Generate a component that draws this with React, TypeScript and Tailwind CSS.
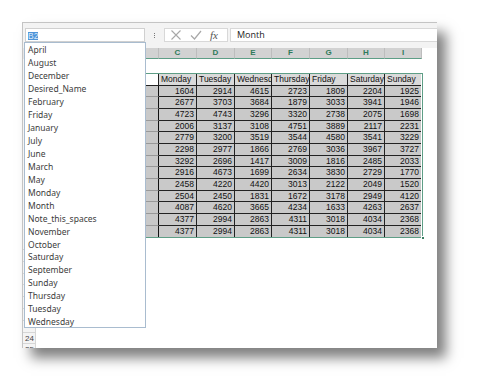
import React from "react";

const items = [
  "April","August","December","Desired_Name","February","Friday","January","July","June","March","May","Monday","Month","Note_this_spaces","November","October","Saturday","September","Sunday","Thursday","Tuesday","Wednesday",
];

const headers = ["Monday","Tuesday","Wednesday","Thursday","Friday","Saturday","Sunday"];
const data = [
  [1604,2914,4615,2723,1809,2204,1925],
  [2677,3703,3684,1879,3033,3941,1946],
  [4723,4743,3296,3320,2738,2075,1698],
  [2006,3137,3108,4751,3889,2117,2231],
  [2779,3200,3519,3544,4580,3541,3229],
  [2298,2977,1866,2769,3036,3967,3727],
  [3292,2696,1417,3009,1816,2485,2033],
  [2916,4673,1699,2634,3830,2729,1770],
  [2458,4220,4420,3013,2122,2049,1520],
  [2504,2450,1831,1672,3178,2949,4120],
  [4087,4620,3665,4234,1633,4263,2637],
  [4377,2994,2863,4311,3018,4034,2368],
  [4377,2994,2863,4311,3018,4034,2368],
];
const colW = [38,38,37,38,38,37,37];
const letters = ["C","D","E","F","G","H","I"];

export default function App() {
  return (
    <div className="w-[479px] h-[390px] bg-white overflow-hidden" style={{ fontFamily: '"Liberation Sans", Arial, sans-serif' }}>
      <div className="relative ml-[22px] mt-[22px] w-[415px] h-[326px] bg-white border-t border-l border-[#c4c4c4] shadow-[9px_10px_12px_rgba(0,0,0,0.5)]">
        <div className="w-full h-full overflow-hidden">
          {/* formula bar */}
          <div className="h-[25px] bg-[#f3f3f3] flex items-start pt-[5px]">
            <div className="ml-[2px] w-[120px] h-[14px] bg-white border border-[#d0d0d0]" />
            <div className="w-[19px] h-[14px] flex flex-col items-center justify-center gap-[1px]">
              <div className="w-[1px] h-[1px] bg-[#777]" />
              <div className="w-[1px] h-[1px] bg-[#777]" />
              <div className="w-[1px] h-[1px] bg-[#777]" />
            </div>
            <div className="w-[64px] h-[14px] bg-white border border-[#d8d8d8] flex items-center">
              <svg width="12" height="12" viewBox="0 0 12 12" className="ml-[5px]">
                <path d="M1.5 1.5 L10.5 10.5 M10.5 1.5 L1.5 10.5" stroke="#a8a8a8" strokeWidth="1.1" fill="none" />
              </svg>
              <svg width="12" height="12" viewBox="0 0 12 12" className="ml-[8px]">
                <path d="M1 6.5 L4.5 10 L11 2" stroke="#a8a8a8" strokeWidth="1.2" fill="none" />
              </svg>
              <span className="ml-[8px] text-[11px] italic leading-none text-[#555]" style={{ fontFamily: '"Liberation Serif", serif' }}>fx</span>
            </div>
            <div className="ml-[2px] flex-1 h-[14px] bg-white border-t border-b border-l border-[#d8d8d8] flex items-center pl-[6px] text-[9px] text-[#222]" style={{ fontFamily: '"Open Sans", sans-serif' }}>
              Month
            </div>
          </div>
          {/* column header band */}
          <div className="flex h-[11px]">
            <div className="w-[13px] bg-[#e6e6e6] border-r border-[#c8c8c8]" />
            <div className="w-[85px] bg-[#e6e6e6] border-r border-[#c8c8c8]" />
            <div className="w-[38px] bg-[#d2d2d2] border-r border-[#bdbdbd] border-b border-b-[#5e9e86]" />
            {letters.map((l, i) => (
              <div key={l} className="bg-[#d2d2d2] border-r border-[#bdbdbd] border-b border-b-[#5e9e86] flex items-center justify-center text-[8px] font-bold text-[#2f7a5a]" style={{ width: colW[i] }}>
                {l}
              </div>
            ))}
            <div className="flex-1 bg-white" />
          </div>
          {/* row 1 */}
          <div className="h-[14px] flex">
            <div className="w-[13px] bg-[#f4f4f4] border-r border-[#cfcfcf]" />
          </div>
          {/* table rows 2-15 */}
          <div className="flex">
            <div className="w-[13px] bg-[#f4f4f4] border-r border-[#cfcfcf]" />
            <div className="w-[85px]" />
            <div className="relative w-[302px] border border-[#5e9e86] text-[8.5px] text-[#111]">
              <div className="flex h-[11.67px]">
                <div className="w-[37px] bg-white border-r border-b border-[#222]" />
                {headers.map((h, i) => (
                  <div key={h} className={"bg-[#dadada] border-b border-[#222] pl-[2px] overflow-hidden whitespace-nowrap leading-[11px] " + (i < 6 ? "border-r" : "")} style={{ width: i === 6 ? colW[i] - 1 : colW[i] }}>
                    {h}
                  </div>
                ))}
              </div>
              {data.map((row, r) => (
                <div key={r} className="flex h-[11.67px]">
                  <div className={"w-[37px] bg-[#c9c9c9] border-r border-r-[#111] " + (r < 12 ? "border-b border-b-[#999]" : "")} />
                  {row.map((v, i) => (
                    <div key={i} className={"bg-[#c9c9c9] text-right pr-[2px] leading-[11px] border-[#222] " + (i < 6 ? "border-r " : "") + (r < 12 ? "border-b" : "")} style={{ width: i === 6 ? colW[i] - 1 : colW[i] }}>
                      {v}
                    </div>
                  ))}
                </div>
              ))}
              <div className="absolute right-[-3px] bottom-[-3px] w-[4px] h-[4px] bg-[#3a7d62] border border-white" />
            </div>
          </div>
          {/* rows 16-25 */}
          {Array.from({ length: 10 }, (_, k) => 16 + k).map((n) => (
            <div key={n} className="flex h-[11.8px]">
              <div className="w-[13px] bg-[#f4f4f4] border-r border-b border-[#d6d6d6] text-[8px] leading-[11px] text-[#444] pl-[2px]">
                {n >= 24 ? n : ""}
              </div>
            </div>
          ))}
        </div>
        {/* name box text */}
        <div className="absolute left-[5px] top-[9px] h-[8px] w-[10px] bg-[#4f94d8] text-[8.5px] leading-[8px] text-center text-[#dbe9f8]">
          B2
        </div>
        {/* dropdown */}
        <div className="absolute left-[1px] top-[19px] w-[122px] h-[286px] bg-white border border-[#a9bccf] pt-[0.5px]" style={{ fontFamily: '"Noto Sans", "Open Sans", sans-serif' }}>
          {items.map((it) => (
            <div key={it} className="h-[12.94px] pl-[3px] flex items-center text-[8.5px] leading-[11px] text-[#3c3c3c] whitespace-nowrap">
              {it}
            </div>
          ))}
        </div>
      </div>
    </div>
  );
}
